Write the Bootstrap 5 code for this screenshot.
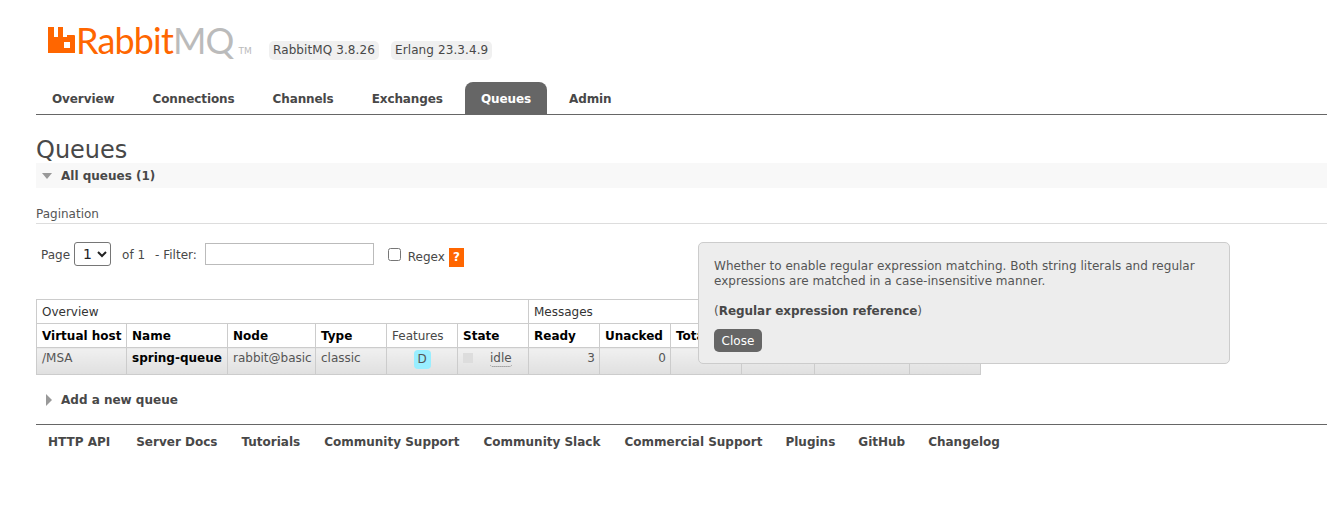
<!doctype html>
<html lang="en">
<head>
<meta charset="utf-8">
<title>RabbitMQ Management</title>
<link rel="stylesheet" href="https://cdn.jsdelivr.net/npm/bootstrap@5.3.0/dist/css/bootstrap.min.css">
<style>
html,body{height:531px;overflow:hidden}
body{font-family:"DejaVu Sans",Verdana,sans-serif;font-size:12px;line-height:15px;color:#484848;background:#fff;position:relative}
.hdr{height:82px;padding:21px 0 0 47px;gap:16px}
.brand{font-family:"Lato","Open Sans",sans-serif;font-weight:400;font-size:36px;line-height:38px;letter-spacing:-.85px;color:#f60;gap:1px;width:206px;flex:none}
.brand-ic{flex:none;margin-top:6px}
.brand-word{flex:none}
.brand-mq{color:#bbb}
.brand-tm{flex:none;font-size:9px;line-height:9px;color:#bbb;margin:26px 0 0 4px;font-family:"DejaVu Sans",sans-serif;letter-spacing:0}
.ver{background:#f0f0f0;border-radius:5px;padding:2px 4px;height:19px;font-size:12px;line-height:15px;letter-spacing:.1px;color:#484848}
.vers{gap:12px;padding-top:20px}
.tabs{margin-left:36px;height:33px;border-bottom:1px solid #666;gap:6px;font-weight:700}
.tabs .nav-link{color:#484848;padding:9px 16px 0;height:32px;line-height:17px;font-size:12px;letter-spacing:-.1px;border-radius:8px 8px 0 0}
.tabs .nav-link.active{background:#666;color:#fff}
.main{padding:0 0 0 36px}
.ttl{font-size:24px;line-height:30px;font-weight:400;margin:20px 0 0;color:#484848;height:28px}
.band{background:#f8f8f8;height:25px;font-weight:700;font-size:12px;line-height:25px;padding:1px 0 0 25px;position:relative;color:#484848}
.tri-d{position:absolute;left:6px;top:10px;width:0;height:0;border-left:5.5px solid transparent;border-right:5.5px solid transparent;border-top:6px solid #999}
.pg{margin-top:18px;height:18px;border-bottom:1px solid #ddd;color:#555;line-height:15px;padding-top:1px}
.filt{margin-top:18px;height:24px;padding-left:5px;color:#484848;align-items:center}
.filt select{width:37px;height:24px;font-size:14px;font-family:"DejaVu Sans",sans-serif;margin:0 11px 0 4px;padding:0 0 0 4px;border:1px solid #767676;border-radius:3px;background:#fff;color:#222}
.filt .f-in{width:169px;height:22px;border:1px solid #bbb;margin:0 14px 0 8px;background:#fff;flex:none}
.filt .f-ck{width:13px;height:13px;margin:0 7px 0 0;flex:none}
.txt-a{margin-top:2px}
.txt-b{margin-top:6px}
.q-tag{background:#f60;color:#fff;font-weight:700;width:15px;height:19px;line-height:19px;text-align:center;margin:6px 0 0 4px}
.gap-sep{margin-left:10px}
.qtab{table-layout:fixed;width:945px;margin:33px 0 0;border-collapse:collapse;font-size:12px;line-height:15px;color:#484848}
.qtab th,.qtab td{border:1px solid #ccc;padding:5px 5px 2px;height:24px;background:#fff;vertical-align:top;color:#484848;white-space:nowrap;overflow:hidden}
.qtab th{font-weight:400}
.qtab tr.hb th.b{font-weight:700;color:#000}
.qtab tr.grp th{color:#333}
.qtab tbody td{background:linear-gradient(#f0f0f0,#e0e0e0);height:27px;padding-top:2px;padding-bottom:0;color:#555}
.qtab tbody td.cel-t{padding-top:3px}
.qtab .num{text-align:right;padding-right:4px}
.qtab .bq{font-weight:700;color:#000}
.qtab .ctr{text-align:center}
.d-tag{display:inline-block;background:#9ef;border-radius:4px;width:17px;height:19px;line-height:19px;color:#555}
.stsq{display:inline-block;width:10px;height:10px;background:#ddd;margin:0 17px 0 0;vertical-align:-1px}
.idle{border-bottom:1px dotted #777;padding-bottom:1px;border-radius:0 0 3px 3px}
.c1{width:90px}.c2{width:101px}.c3{width:88px}.c4,.c5,.c6,.c7,.c8,.c9{width:71px}.c10{width:73px}.c11{width:95px}.c12{width:71px}
.addq{margin-top:18px;height:15px;font-weight:700;font-size:12px;padding-left:25px;position:relative}
.tri-r{position:absolute;left:10px;top:1px;width:0;height:0;border-top:6px solid transparent;border-bottom:6px solid transparent;border-left:6px solid #999}
.foot{margin:16px 0 0 36px;border-top:1px solid #666;padding:10px 0 0 12px;gap:24px;font-weight:700;font-size:12px}
.foot a{color:#484848;text-decoration:none}
.foot a.wide{margin-right:2px}
.foot a.tight{margin-left:-1px}
.pop{position:absolute;left:698px;top:242px;width:532px;height:122px;background:#ededed;border:1px solid #ccc;border-radius:5px;padding:16px 15px 15px;color:#555;z-index:5;letter-spacing:.025px}
.pop p{margin:0 0 15px;line-height:15px}
.pop p.ref-ln{margin-bottom:13px}
.pop .bq2{font-weight:700;font-size:12px;color:#484848;letter-spacing:-.05px}
.cl{display:block;background:#666;color:#fff;width:48px;height:23px;line-height:24px;text-align:center;border-radius:5px;margin-top:-3px;text-decoration:none}
</style>
</head>
<body>
<header class="hdr d-flex">
  <div class="brand d-flex align-items-start">
    <svg class="brand-ic" width="28" height="26" viewBox="0 0 28 26" aria-hidden="true"><path fill="#f60" fill-rule="evenodd" d="M1 0h6v10h4V0h5v10h4V8h7a1 1 0 0 1 1 1v17H1zM17 15v6h6v-6z"/></svg>
    <span class="brand-word">Rabbit<span class="brand-mq">MQ</span></span>
    <span class="brand-tm">TM</span>
  </div>
  <div class="vers d-flex align-items-start">
    <span class="ver">RabbitMQ 3.8.26</span>
    <span class="ver">Erlang 23.3.4.9</span>
  </div>
</header>
<ul class="nav tabs">
  <li class="nav-item"><a class="nav-link" href="#">Overview</a></li>
  <li class="nav-item"><a class="nav-link" href="#">Connections</a></li>
  <li class="nav-item"><a class="nav-link" href="#">Channels</a></li>
  <li class="nav-item"><a class="nav-link" href="#">Exchanges</a></li>
  <li class="nav-item"><a class="nav-link active" href="#">Queues</a></li>
  <li class="nav-item"><a class="nav-link" href="#">Admin</a></li>
</ul>
<main class="main">
  <h1 class="ttl">Queues</h1>
  <div class="band"><span class="tri-d"></span>All queues (1)</div>
  <div class="pg">Pagination</div>
  <div class="filt d-flex">
    <span class="txt-a">Page</span>
    <select><option>1</option></select>
    <span class="txt-a">of 1</span>
    <span class="gap-sep txt-a">- Filter:</span>
    <input class="f-in" type="text">
    <input class="f-ck" type="checkbox">
    <span class="txt-b">Regex</span>
    <span class="q-tag">?</span>
  </div>
  <table class="qtab">
    <colgroup><col class="c1"><col class="c2"><col class="c3"><col class="c4"><col class="c5"><col class="c6"><col class="c7"><col class="c8"><col class="c9"><col class="c10"><col class="c11"><col class="c12"></colgroup>
    <thead>
      <tr class="grp"><th colspan="6">Overview</th><th colspan="6">Messages</th></tr>
      <tr class="hb"><th class="b">Virtual host</th><th class="b">Name</th><th class="b">Node</th><th class="b">Type</th><th>Features</th><th class="b">State</th><th class="b">Ready</th><th class="b">Unacked</th><th class="b">Total</th><th></th><th></th><th></th></tr>
    </thead>
    <tbody>
      <tr><td class="cel-t">/MSA</td><td class="bq cel-t">spring-queue</td><td class="cel-t">rabbit@basic</td><td class="cel-t">classic</td><td class="ctr"><span class="d-tag">D</span></td><td class="cel-t"><span class="stsq"></span><span class="idle">idle</span></td><td class="num cel-t">3</td><td class="num cel-t">0</td><td></td><td></td><td></td><td></td></tr>
    </tbody>
  </table>
  <div class="addq"><span class="tri-r"></span>Add a new queue</div>
</main>
<footer class="foot d-flex">
  <a class="wide" href="#">HTTP API</a><a href="#">Server Docs</a><a href="#">Tutorials</a><a href="#">Community Support</a><a href="#">Community Slack</a><a href="#">Commercial Support</a><a class="tight" href="#">Plugins</a><a class="tight" href="#">GitHub</a><a class="tight" href="#">Changelog</a>
</footer>
<div class="pop">
  <p>Whether to enable regular expression matching. Both string literals and regular expressions are matched in a case-insensitive manner.</p>
  <p class="ref-ln">(<span class="bq2">Regular expression reference</span>)</p>
  <a class="cl" href="#">Close</a>
</div>
<script src="https://cdn.jsdelivr.net/npm/bootstrap@5.3.0/dist/js/bootstrap.bundle.min.js"></script>
</body>
</html>
